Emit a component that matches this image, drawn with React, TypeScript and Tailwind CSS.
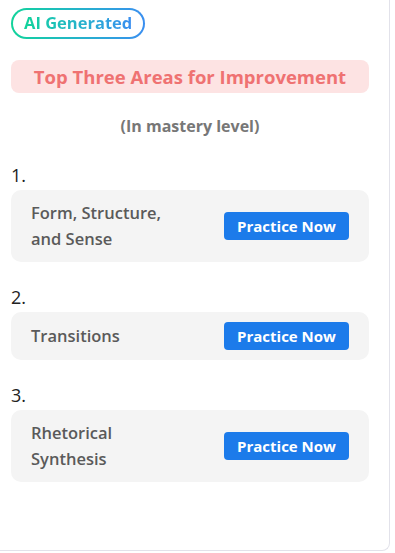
import React from 'react';

const areas = [
  { title: 'Form, Structure, and Sense', lines: ['Form, Structure,', 'and Sense'] },
  { title: 'Transitions', lines: ['Transitions'] },
  { title: 'Rhetorical Synthesis', lines: ['Rhetorical', 'Synthesis'] },
];

export default function App() {
  return (
    <div className="min-h-screen bg-white" style={{ fontFamily: '"Open Sans", Lato, sans-serif' }}>
      <div className="w-[390px] h-[551px] border-r border-b border-[#e2e2ea] rounded-br-[8px] pl-[11px] pr-[20px] pt-[8px]">
        {/* badge */}
        <div className="inline-flex rounded-full p-[2px] bg-gradient-to-r from-[#12d39a] to-[#3a8ef0]">
          <div className="rounded-full bg-white px-[11px] h-[27px] flex items-center">
            <span className="text-[16.5px] font-bold bg-gradient-to-r from-[#12d39a] to-[#3a8ef0] bg-clip-text text-transparent">
              AI Generated
            </span>
          </div>
        </div>

        <div className="mt-[21px] h-[33px] rounded-[8px] bg-[#fde3e3] flex items-center justify-center">
          <span className="text-[18.5px] font-bold text-[#ef7272]">Top Three Areas for Improvement</span>
        </div>

        <p className="mt-[21px] text-center text-[16px] leading-[25px] font-bold text-[#777777]">(In mastery level)</p>

        <div className="mt-[25px] flex flex-col gap-[24px]">
          {areas.map((a, i) => (
            <div key={a.title}>
              <div className="h-[26px] text-[18px] leading-[22px] text-[#222222]">{i + 1}.</div>
              <div className="rounded-[10px] bg-[#f4f4f4] pl-[20px] pr-[20px] py-[10px] flex items-center justify-between">
                <div className="text-[16.5px] font-semibold leading-[26px] text-[#5a5a5a]">
                  {a.lines.map(l => (
                    <div key={l}>{l}</div>
                  ))}
                </div>
                <button className="h-[28px] w-[125px] rounded-[4px] bg-[#1c7bea] text-white text-[15px] font-bold">
                  Practice Now
                </button>
              </div>
            </div>
          ))}
        </div>
      </div>
    </div>
  );
}
